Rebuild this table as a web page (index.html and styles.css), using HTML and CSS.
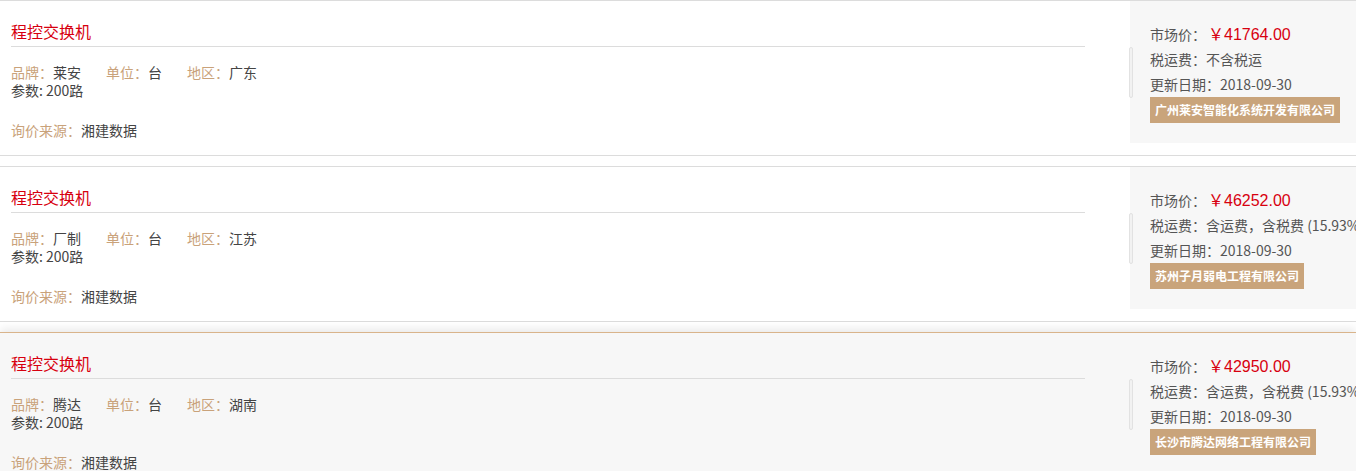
FILE: index.html
```html
<!DOCTYPE html>
<html lang="zh-CN">
<head>
<meta charset="utf-8">
<title>程控交换机</title>
<link rel="stylesheet" href="styles.css">
</head>
<body>
<div class="list">
  <div class="item">
    <div class="main">
      <h3 class="title">程控交换机</h3>
      <div class="attrs">
        <span class="attr"><span class="lbl">品牌：</span>莱安</span>
        <span class="attr"><span class="lbl">单位：</span>台</span>
        <span class="attr"><span class="lbl">地区：</span>广东</span>
      </div>
      <div class="params">参数: 200路</div>
      <div class="source"><span class="lbl">询价来源：</span>湘建数据</div>
    </div>
    <div class="side">
      <span class="grip"></span>
      <div class="line">市场价：<span class="price">￥41764.00</span></div>
      <div class="line">税运费：不含税运</div>
      <div class="line">更新日期：2018-09-30</div>
      <span class="company">广州莱安智能化系统开发有限公司</span>
    </div>
  </div>
  <div class="item">
    <div class="main">
      <h3 class="title">程控交换机</h3>
      <div class="attrs">
        <span class="attr"><span class="lbl">品牌：</span>厂制</span>
        <span class="attr"><span class="lbl">单位：</span>台</span>
        <span class="attr"><span class="lbl">地区：</span>江苏</span>
      </div>
      <div class="params">参数: 200路</div>
      <div class="source"><span class="lbl">询价来源：</span>湘建数据</div>
    </div>
    <div class="side">
      <span class="grip"></span>
      <div class="line">市场价：<span class="price">￥46252.00</span></div>
      <div class="line">税运费：含运费，含税费 (15.93%)</div>
      <div class="line">更新日期：2018-09-30</div>
      <span class="company">苏州子月弱电工程有限公司</span>
    </div>
  </div>
  <div class="item active">
    <div class="main">
      <h3 class="title">程控交换机</h3>
      <div class="attrs">
        <span class="attr"><span class="lbl">品牌：</span>腾达</span>
        <span class="attr"><span class="lbl">单位：</span>台</span>
        <span class="attr"><span class="lbl">地区：</span>湖南</span>
      </div>
      <div class="params">参数: 200路</div>
      <div class="source"><span class="lbl">询价来源：</span>湘建数据</div>
    </div>
    <div class="side">
      <span class="grip"></span>
      <div class="line">市场价：<span class="price">￥42950.00</span></div>
      <div class="line">税运费：含运费，含税费 (15.93%)</div>
      <div class="line">更新日期：2018-09-30</div>
      <span class="company">长沙市腾达网络工程有限公司</span>
    </div>
  </div>
</div>
</body>
</html>
```

FILE: styles.css
```css
html, body {
  margin: 0;
  padding: 0;
  overflow: hidden;
  background: #fff;
}
body {
  font-family: "Microsoft YaHei", "Noto Sans CJK SC", sans-serif;
  font-size: 14px;
  color: #555;
}
.list {
  display: flex;
  flex-direction: column;
  gap: 10px;
}
.item {
  display: flex;
  align-items: flex-start;
  padding-left: 11px;
  border-top: 1px solid #dcdcdc;
  border-bottom: 1px solid #dcdcdc;
  height: 154px;
  background: #fff;
}
.item.active {
  background: #f7f7f7;
  border-top-color: #d9b48b;
  box-shadow: 0 -3px 9px rgba(0, 0, 0, 0.09);
}
.main {
  width: 1074px;
  flex: none;
  margin-right: 45px;
}
.title {
  margin: 15px 0 0;
  font-size: 16px;
  font-weight: normal;
  color: #d7000f;
  line-height: 30px;
  border-bottom: 1px solid #dcdcdc;
}
.attrs {
  margin-top: 16px;
  display: flex;
  gap: 25px;
  line-height: 18px;
  font-size: 14px;
  color: #444;
}
.lbl {
  color: #c9a27a;
}
.params {
  line-height: 18px;
  color: #444;
}
.source {
  margin-top: 22px;
  line-height: 18px;
  color: #444;
}
.side {
  position: relative;
  flex: 1;
  min-width: 0;
  box-sizing: border-box;
  height: 142px;
  padding: 21px 0 20px 20px;
  background: #f7f7f7;
  white-space: nowrap;
}
.grip {
  position: absolute;
  left: -1px;
  top: 46px;
  width: 2px;
  height: 49px;
  border: 1px solid #e2e2e2;
  border-radius: 2px;
  background: #f2f2f2;
}
.line {
  line-height: 25px;
  color: #555;
}
.price {
  color: #d7000f;
  font-size: 16px;
  font-family: "Liberation Sans", "Noto Sans CJK SC", sans-serif;
  margin-left: 2px;
}
.company {
  display: inline-block;
  background: #c9a47b;
  color: #fff;
  font-size: 12px;
  font-weight: bold;
  line-height: 26px;
  padding: 0 5px;
}
```
